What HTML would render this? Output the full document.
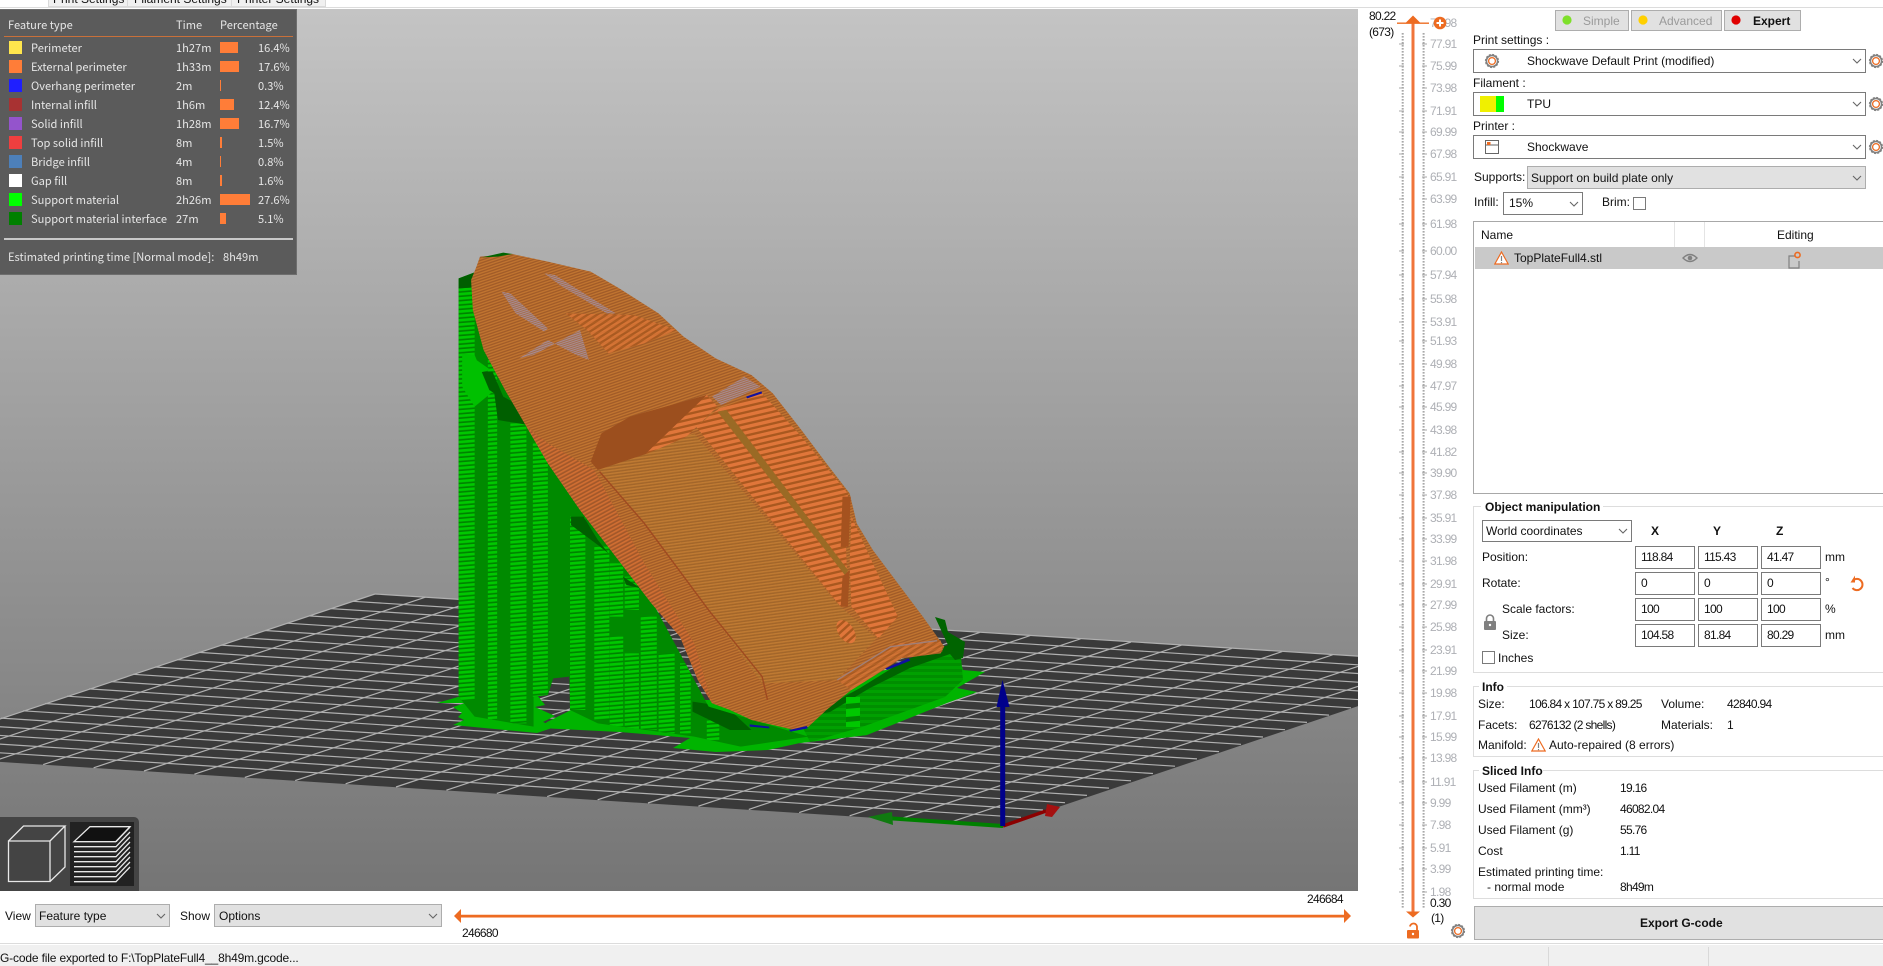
<!DOCTYPE html>
<html><head><meta charset="utf-8"><style>
html,body{margin:0;padding:0;width:1883px;height:966px;overflow:hidden;background:#fff}
body{position:relative;font-family:"Liberation Sans",sans-serif;font-size:12px;color:#111}
.t{position:absolute;white-space:nowrap;line-height:16px}
.n{letter-spacing:-.7px}
.b{font-weight:bold}
.r{position:absolute;box-sizing:border-box}
.c{background:#fff;border:1px solid #7a7a7a}
.g{background:#e1e1e1;border:1px solid #adadad}
.i{background:#fff;border:1px solid #7a7a7a;width:60px;height:23px}
.l{position:absolute;font-family:"Noto Sans CJK SC",sans-serif;font-size:11.1px;color:#e6e6e6;white-space:nowrap;line-height:18px}
.s{position:absolute;left:9px;width:13px;height:13px}
.bar{position:absolute;left:220px;height:11px;background:#ff7d38}
.y{position:absolute;left:1430px;color:#aeb0b5;white-space:nowrap;line-height:16px;letter-spacing:-.7px}
svg{position:absolute;overflow:visible}
</style></head><body>

<!-- top tabs -->
<div class="r" style="left:48px;top:-3px;width:80px;height:10px;background:#f0f0f0;border:1px solid #d9d9d9"></div>
<div class="r" style="left:127px;top:-3px;width:105px;height:10px;background:#f0f0f0;border:1px solid #d9d9d9"></div>
<div class="r" style="left:231px;top:-3px;width:95px;height:10px;background:#f0f0f0;border:1px solid #d9d9d9"></div>
<div class="t" style="left:53px;top:-9px">Print Settings</div>
<div class="t" style="left:134px;top:-9px">Filament Settings</div>
<div class="t" style="left:237px;top:-9px">Printer Settings</div>
<div class="r" style="left:0;top:7px;width:1883px;height:1px;background:#dcdcdc"></div>

<!-- viewport -->
<div class="r" style="left:0;top:9px;width:1358px;height:882px;overflow:hidden;background:linear-gradient(#c4c4c4,#757575)">
<svg width="1358" height="882" viewBox="0 9 1358 882" style="left:0;top:0">
<defs>
<pattern id="st" width="20" height="13" patternUnits="userSpaceOnUse" patternTransform="rotate(-5)"><rect width="20" height="13" fill="#008200"/><rect width="20" height="8" fill="#00c800"/></pattern>
<pattern id="st2" width="20" height="6" patternUnits="userSpaceOnUse"><rect width="20" height="6" fill="#008e00"/><rect width="20" height="3" fill="#00a000"/></pattern>
<pattern id="fine" width="8" height="8" patternUnits="userSpaceOnUse" patternTransform="rotate(-20)"><rect width="8" height="8" fill="#a25c28"/><rect width="8" height="4" fill="#c07430"/></pattern>
<pattern id="ol" width="9" height="9" patternUnits="userSpaceOnUse" patternTransform="rotate(-8)"><rect width="9" height="9" fill="#a3662a"/><rect width="9" height="4.5" fill="#bf7a32"/></pattern>
<pattern id="big" width="20" height="17" patternUnits="userSpaceOnUse" patternTransform="rotate(-14)"><rect width="20" height="17" fill="#a9581f"/><rect width="20" height="10" fill="#e0763a"/></pattern>
<pattern id="big2" width="20" height="15" patternUnits="userSpaceOnUse" patternTransform="rotate(-35)"><rect width="20" height="15" fill="#a9581f"/><rect width="20" height="8" fill="#dc7536"/></pattern>
<pattern id="side" width="10" height="10" patternUnits="userSpaceOnUse" patternTransform="rotate(-30)"><rect width="10" height="10" fill="#a2582a"/><rect width="10" height="5" fill="#d06e32"/></pattern>
<pattern id="grey" width="6" height="6" patternUnits="userSpaceOnUse" patternTransform="rotate(-20)"><rect width="6" height="6" fill="#a4704a"/><rect width="6" height="3" fill="#a88a96"/></pattern>
<clipPath id="sup"><path d="M80 145L130 125L150 95L220 70L300 500L640 1150L780 1430L1060 1520L870 1550L740 1520L470 1480L392 1440L390 1340L345 1345L330 1395L290 1400L290 1490L125 1460L80 1400Z"/></clipPath>
</defs>

<!-- plate -->
<path d="M375 594L1483 664L1002 826L-108 755Z" fill="#3a3a3a"/>
<path fill="none" stroke="#b0b0b0" stroke-width="1.2" d="M375 594l-483 161m533.4 -157.8l-483 161m533.4 -157.8l-483 161m533.4 -157.8l-483 161m533.4 -157.8l-483 161m533.4 -157.8l-483 161m533.4 -157.8l-483 161m533.4 -157.8l-483 161m533.4 -157.8l-483 161m533.4 -157.8l-483 161m533.4 -157.8l-483 161m533.4 -157.8l-483 161m533.4 -157.8l-483 161m533.4 -157.8l-483 161m533.4 -157.8l-483 161m533.4 -157.8l-483 161m533.4 -157.8l-483 161m533.4 -157.8l-483 161m533.4 -157.8l-483 161m533.4 -157.8l-483 161m533.4 -157.8l-483 161m533.4 -157.8l-483 161"/>
<path fill="none" stroke="#b0b0b0" stroke-width="1.2" d="M375 594l1108 70m-1130 -62.7l1108 70m-1130 -62.7l1108 70m-1130 -62.7l1108 70m-1130 -62.7l1108 70m-1130 -62.7l1108 70m-1130 -62.7l1108 70m-1130 -62.7l1108 70m-1130 -62.7l1108 70m-1130 -62.7l1108 70m-1130 -62.7l1108 70m-1130 -62.7l1108 70m-1130 -62.7l1108 70m-1130 -62.7l1108 70m-1130 -62.7l1108 70m-1130 -62.7l1108 70m-1130 -62.7l1108 70m-1130 -62.7l1108 70m-1130 -62.7l1108 70m-1130 -62.7l1108 70m-1130 -62.7l1108 70m-1130 -62.7l1108 70"/>

<!-- base brims -->
<path fill="#00b400" d="M437 703L458 697L533 690L545 705L535 707L555 716L543 722L555 727L537 733L453 725L464 720L458 717L462 713L453 707L465 703Z"/>
<path fill="#00b400" d="M547 722L573 709L640 700L860 700L867 735L800 743L768 750L716 752L673 748L690 738L620 732L540 728Z"/>

<!-- front right support -->
<path fill="#00b400" d="M800 743L867 735L947 703L977 692L957 688L985 672L963 670L957 650L850 680Z"/>
<path fill="url(#st2)" d="M800 722L845 695L960 645L963 680L945 697L862 727L810 742Z"/>
<path fill="#006400" d="M935 617L945 620L948 632L965 642L963 658L955 660L950 654L910 668L870 688L830 712L810 716L860 688L905 660L948 645Z"/>
<rect x="846" y="697" width="14" height="30" fill="url(#st)"/>

<!-- towers (z coords) -->
<g transform="translate(430 230) scale(.35714 .33333)">
<g clip-path="url(#sup)">
<rect x="60" y="60" width="1050" height="1520" fill="#008a00"/>
<rect x="80" y="170" width="45" height="1240" fill="url(#st)"/>
<rect x="162" y="370" width="26" height="1100" fill="url(#st)"/>
<rect x="225" y="580" width="45" height="900" fill="url(#st)"/>
<rect x="288" y="640" width="42" height="760" fill="url(#st)"/>
<rect x="392" y="860" width="43" height="580" fill="url(#st)"/>
<rect x="460" y="950" width="42" height="520" fill="url(#st)"/>
<rect x="503" y="1000" width="38" height="160" fill="url(#st)"/>
<rect x="503" y="1220" width="38" height="280" fill="url(#st)"/>
<rect x="545" y="1040" width="40" height="100" fill="url(#st)"/>
<rect x="545" y="1270" width="40" height="230" fill="url(#st)"/>
<rect x="590" y="1160" width="45" height="340" fill="url(#st)"/>
<rect x="640" y="1270" width="45" height="240" fill="url(#st)"/>
<rect x="700" y="1300" width="30" height="210" fill="url(#st)"/>
<rect x="775" y="1460" width="35" height="70" fill="url(#st)"/>
<path fill="#005f00" d="M80 145L130 125L160 170L80 175ZM125 425L175 425L205 500L240 520L275 560L275 585L190 570L180 490L125 450ZM395 860L430 860L470 930L500 970L470 945L395 885ZM540 1040L590 1075L550 1065ZM735 1415L830 1430L900 1500L840 1500L735 1445Z"/>
<path fill="#00c000" d="M90 370L125 375L170 490L125 530L90 470ZM130 390L170 420L130 430Z"/>
</g>
<!-- model -->
<path fill="url(#fine)" d="M140 80L230 72L330 95L450 125L530 175L640 250L710 320L800 385L900 435L960 490L1040 600L1110 700L1175 790L1195 880L1240 960L1310 1060L1380 1160L1440 1250L1430 1270L1320 1285L1270 1320L1180 1380L1110 1440L1060 1490L1020 1500L900 1470L840 1440L790 1420L750 1350L700 1220L620 1120L520 980L420 840L330 700L270 590L210 480L150 360L120 240L115 150L130 110Z"/>
<path fill="#006400" d="M145 82L205 68L232 72L190 80Z"/>
<path fill="url(#side)" d="M270 590L330 640L460 720L600 1000L740 1240L790 1420L750 1350L700 1220L620 1120L520 980L420 840L330 700Z"/>
<path fill="url(#grey)" d="M200 185L225 190L330 295L320 305L240 250ZM320 130L350 135L520 250L495 250L370 170ZM790 500L880 440L925 470L815 525ZM250 385L290 375L420 300L445 390L410 375L330 330Z"/>
<path fill="url(#big2)" opacity=".8" d="M380 250L570 255L690 300L600 340L500 370L440 300Z"/>
<path fill="#9c4f1e" d="M450 695L480 610L560 560L775 495L610 670L470 720Z"/>
<path fill="url(#big)" d="M605 670L775 495L805 530L640 700Z"/>
<path fill="url(#big)" d="M745 590L810 535L930 490L1040 620L1170 790L1165 950L1170 1120L1150 1130Z"/>
<path fill="#9a6a25" d="M805 545L830 540L1170 1020L1165 1040Z"/>
<path fill="url(#ol)" d="M470 720L610 670L740 610L1140 1120L1250 1225L1140 1350L930 1360L780 1140L600 880Z"/>
<path fill="#a5521f" d="M1155 800L1178 800L1172 950L1150 950ZM1155 1040L1175 1020L1170 1130L1150 1130Z"/>
<path fill="url(#big)" d="M1180 860L1240 1000L1310 1160L1255 1225L1180 1130L1175 1000Z"/>
<ellipse cx="1165" cy="1205" rx="22" ry="38" fill="url(#big)" transform="rotate(-30 1165 1205)"/>
<path fill="url(#big2)" d="M1140 1350L1300 1240L1430 1230L1435 1265L1320 1285L1270 1320L1180 1380Z" opacity=".65"/>
<path fill="none" stroke="#a07f78" stroke-width="4" d="M1140 1350L1290 1250L1420 1232"/>
<path fill="none" stroke="#a04a20" stroke-width="4" d="M475 725L600 880L780 1140L930 1340L945 1410"/>
<path fill="#1010a0" d="M885 500L928 484L930 490L888 505ZM1275 1315L1340 1285L1345 1292L1280 1320ZM895 1483L950 1490L950 1495L895 1490ZM1005 1500L1055 1488L1058 1495L1010 1505Z"/>
</g>

<!-- axes -->
<path d="M1003 826L886 818" stroke="#008000" stroke-width="4" fill="none"/>
<path d="M868 817L892 812L893 825Z" fill="#107a10"/>
<path d="M1003 826L1046 811" stroke="#8b0000" stroke-width="3.5" fill="none"/>
<path d="M1060 807L1047 804L1045 816L1052 817Z" fill="#a51010"/>
<path d="M1002.7 705V826" stroke="#00008b" stroke-width="5" fill="none"/>
<path d="M1002.5 680L996.5 707H1009.5Z" fill="#00008b"/>
</svg>

<!-- legend -->
<div class="r" style="left:0;top:0;width:297px;height:266px;background:#5b5b5b;border:1px solid #6e6e6e;border-left:0"></div>
</div>

<div class="l" style="left:8px;top:16px">Feature type</div>
<div class="l" style="left:176px;top:16px">Time</div>
<div class="l" style="left:220px;top:16px">Percentage</div>
<div class="r" style="left:4px;top:36px;width:289px;height:1px;background:#c9703a"></div>

<div class="s" style="top:41px;background:#ffe64d"></div><div class="l" style="left:31px;top:39px">Perimeter</div><div class="l" style="left:176px;top:39px">1h27m</div><div class="bar" style="top:42px;width:18px"></div><div class="l" style="left:258px;top:39px">16.4%</div>
<div class="s" style="top:60px;background:#ff7d38"></div><div class="l" style="left:31px;top:58px">External perimeter</div><div class="l" style="left:176px;top:58px">1h33m</div><div class="bar" style="top:61px;width:19px"></div><div class="l" style="left:258px;top:58px">17.6%</div>
<div class="s" style="top:79px;background:#1f1fff"></div><div class="l" style="left:31px;top:77px">Overhang perimeter</div><div class="l" style="left:176px;top:77px">2m</div><div class="bar" style="top:80px;width:1px"></div><div class="l" style="left:258px;top:77px">0.3%</div>
<div class="s" style="top:98px;background:#a83232"></div><div class="l" style="left:31px;top:96px">Internal infill</div><div class="l" style="left:176px;top:96px">1h6m</div><div class="bar" style="top:99px;width:13.5px"></div><div class="l" style="left:258px;top:96px">12.4%</div>
<div class="s" style="top:117px;background:#9454cc"></div><div class="l" style="left:31px;top:115px">Solid infill</div><div class="l" style="left:176px;top:115px">1h28m</div><div class="bar" style="top:118px;width:18.5px"></div><div class="l" style="left:258px;top:115px">16.7%</div>
<div class="s" style="top:136px;background:#ef3f3f"></div><div class="l" style="left:31px;top:134px">Top solid infill</div><div class="l" style="left:176px;top:134px">8m</div><div class="bar" style="top:137px;width:2px"></div><div class="l" style="left:258px;top:134px">1.5%</div>
<div class="s" style="top:155px;background:#4d80ba"></div><div class="l" style="left:31px;top:153px">Bridge infill</div><div class="l" style="left:176px;top:153px">4m</div><div class="bar" style="top:156px;width:1px"></div><div class="l" style="left:258px;top:153px">0.8%</div>
<div class="s" style="top:174px;background:#fff"></div><div class="l" style="left:31px;top:172px">Gap fill</div><div class="l" style="left:176px;top:172px">8m</div><div class="bar" style="top:175px;width:2px"></div><div class="l" style="left:258px;top:172px">1.6%</div>
<div class="s" style="top:193px;background:#0f0"></div><div class="l" style="left:31px;top:191px">Support material</div><div class="l" style="left:176px;top:191px">2h26m</div><div class="bar" style="top:194px;width:30px"></div><div class="l" style="left:258px;top:191px">27.6%</div>
<div class="s" style="top:212px;background:#008000"></div><div class="l" style="left:31px;top:210px">Support material interface</div><div class="l" style="left:176px;top:210px">27m</div><div class="bar" style="top:213px;width:5.5px"></div><div class="l" style="left:258px;top:210px">5.1%</div>
<div class="r" style="left:4px;top:238px;width:289px;height:2px;background:#c8c8c8"></div>
<div class="l" style="left:8px;top:248px">Estimated printing time [Normal mode]:</div>
<div class="l" style="left:223px;top:248px">8h49m</div>

<!-- view toolbar -->
<div class="r" style="left:0;top:817px;width:139px;height:74px;background:#444;border-radius:0 5px 0 0"></div>
<div class="r" style="left:70px;top:822px;width:64px;height:64px;background:#222"></div>
<svg width="140" height="80" viewBox="0 815 140 80" style="left:0;top:815px" fill="none" stroke="#e8e8e8" stroke-width="1.3">
<path d="M8.5 841H50V881.5H8.5ZM8.5 841L23.5 826H65L50 841M65 826V867L50 881.5"/>
<path d="M74 841.7L90 826.7H130L115.7 841.7Z" fill="#111"/>
<path d="M74 846.7H116L130 832M74 851.7H116L130 837M74 856.7H116L130 842M74 861.7H116L130 847M74 866.7H116L130 852M74 871.7H116L130 857M74 876.7H116L130 862M74 881.7H116L130 867M116 841.7L130 827"/>
</svg>

<!-- bottom combos -->
<div class="t" style="left:5px;top:908px">View</div>
<div class="r g" style="left:35px;top:904px;width:135px;height:23px"></div>
<div class="t" style="left:39px;top:908px">Feature type</div>
<div class="t" style="left:180px;top:908px">Show</div>
<div class="r g" style="left:214px;top:904px;width:228px;height:23px"></div>
<div class="t" style="left:219px;top:908px">Options</div>
<svg width="1883" height="966" viewBox="0 0 1883 966" style="left:0;top:0">
<defs>
<symbol id="gear" viewBox="0 0 14 14" overflow="visible"><circle cx="7" cy="7" r="5.6" fill="#fff" stroke="#808080" stroke-width="1.6"/><circle cx="7" cy="7" r="6.5" fill="none" stroke="#808080" stroke-width="1.2" stroke-dasharray="2 1.4"/><circle cx="7" cy="7" r="3.4" fill="#fff" stroke="#ed6b21" stroke-width="1.3"/></symbol>
<symbol id="warn" viewBox="0 0 15 14"><path d="M7.5 1L14.2 13H.8Z" fill="#fff" stroke="#ed6b21" stroke-width="1.2"/><path d="M7.5 5V10M7.5 11V12.2" stroke="#808080" stroke-width="1.2"/></symbol>
</defs>

<!-- horizontal slider -->
<path d="M460 916H1344" stroke="#ed6b21" stroke-width="2.4"/><path d="M460 917.5H1344" stroke="#f8b08a" stroke-width="1"/>
<path d="M454 916L461 909V923Z" fill="#ed6b21"/>
<path d="M1351 916L1344 909V923Z" fill="#ed6b21"/>

<!-- vertical slider -->
<path d="M1402.7 33V908M1423.6 33V908" stroke="#a8a8a8" stroke-width="2" stroke-dasharray="1.6 1.4" fill="none"/>
<path stroke="#a8a8a8" fill="none" d="M1399 44h5M1422 44h5M1399 66h5M1422 66h5M1399 88h5M1422 88h5M1399 111h5M1422 111h5M1399 132h5M1422 132h5M1399 154h5M1422 154h5M1399 177h5M1422 177h5M1399 199h5M1422 199h5M1399 224h5M1422 224h5M1399 251h5M1422 251h5M1399 275h5M1422 275h5M1399 299h5M1422 299h5M1399 322h5M1422 322h5M1399 341h5M1422 341h5M1399 364h5M1422 364h5M1399 386h5M1422 386h5M1399 407h5M1422 407h5M1399 430h5M1422 430h5M1399 452h5M1422 452h5M1399 473h5M1422 473h5M1399 495h5M1422 495h5M1399 518h5M1422 518h5M1399 539h5M1422 539h5M1399 561h5M1422 561h5M1399 584h5M1422 584h5M1399 605h5M1422 605h5M1399 627h5M1422 627h5M1399 650h5M1422 650h5M1399 671h5M1422 671h5M1399 693h5M1422 693h5M1399 716h5M1422 716h5M1399 737h5M1422 737h5M1399 758h5M1422 758h5M1399 782h5M1422 782h5M1399 803h5M1422 803h5M1399 825h5M1422 825h5M1399 848h5M1422 848h5M1399 869h5M1422 869h5M1399 892h5M1422 892h5"/>
<path d="M1413 22V912" stroke="#f0743a" stroke-width="3"/>
<path d="M1397 23.2H1429" stroke="#ed6b21" stroke-width="1.4"/>
<path d="M1413 15.5L1420 22.5H1406Z" fill="#ed6b21"/>
<path d="M1406 911.5H1420L1413 917.5Z" fill="#ed6b21"/>
</svg>

<div class="y" style="top:15px">79.98</div><div class="y" style="top:36px">77.91</div><div class="y" style="top:58px">75.99</div><div class="y" style="top:80px">73.98</div><div class="y" style="top:103px">71.91</div><div class="y" style="top:124px">69.99</div><div class="y" style="top:146px">67.98</div><div class="y" style="top:169px">65.91</div><div class="y" style="top:191px">63.99</div><div class="y" style="top:216px">61.98</div><div class="y" style="top:243px">60.00</div><div class="y" style="top:267px">57.94</div><div class="y" style="top:291px">55.98</div><div class="y" style="top:314px">53.91</div><div class="y" style="top:333px">51.93</div><div class="y" style="top:356px">49.98</div><div class="y" style="top:378px">47.97</div><div class="y" style="top:399px">45.99</div><div class="y" style="top:422px">43.98</div><div class="y" style="top:444px">41.82</div><div class="y" style="top:465px">39.90</div><div class="y" style="top:487px">37.98</div><div class="y" style="top:510px">35.91</div><div class="y" style="top:531px">33.99</div><div class="y" style="top:553px">31.98</div><div class="y" style="top:576px">29.91</div><div class="y" style="top:597px">27.99</div><div class="y" style="top:619px">25.98</div><div class="y" style="top:642px">23.91</div><div class="y" style="top:663px">21.99</div><div class="y" style="top:685px">19.98</div><div class="y" style="top:708px">17.91</div><div class="y" style="top:729px">15.99</div><div class="y" style="top:750px">13.98</div><div class="y" style="top:774px">11.91</div><div class="y" style="top:795px">9.99</div><div class="y" style="top:817px">7.98</div><div class="y" style="top:840px">5.91</div><div class="y" style="top:861px">3.99</div><div class="y" style="top:884px">1.98</div>

<div class="t n" style="left:1369px;top:8px">80.22</div>
<div class="t n" style="left:1369px;top:24px">(673)</div>
<div class="t n" style="left:1430px;top:895px;color:#111">0.30</div>
<div class="t n" style="left:1431px;top:910px">(1)</div>
<div class="t n" style="left:462px;top:925px">246680</div>
<div class="t n" style="left:1307px;top:891px">246684</div>

<!-- panel: groups -->
<div class="r" style="left:1473px;top:506px;width:420px;height:167px;border:1px solid #ddd"></div>
<div class="r" style="left:1473px;top:686px;width:420px;height:71px;border:1px solid #ddd"></div>
<div class="r" style="left:1473px;top:770px;width:420px;height:129px;border:1px solid #ddd"></div>

<!-- mode -->
<div class="r g" style="left:1555px;top:10px;width:74px;height:21px"></div>
<div class="r g" style="left:1631px;top:10px;width:91px;height:21px"></div>
<div class="r g" style="left:1724px;top:10px;width:77px;height:21px"></div>
<div class="t" style="left:1583px;top:13px;color:#9a9a9a">Simple</div>
<div class="t" style="left:1659px;top:13px;color:#9a9a9a">Advanced</div>
<div class="t b" style="left:1753px;top:13px">Expert</div>

<div class="t" style="left:1473px;top:32px">Print settings :</div>
<div class="r c" style="left:1473px;top:49px;width:393px;height:24px"></div>
<div class="t" style="left:1527px;top:53px">Shockwave Default Print (modified)</div>
<div class="t" style="left:1473px;top:75px">Filament :</div>
<div class="r c" style="left:1473px;top:92px;width:393px;height:24px"></div>
<div class="r" style="left:1480px;top:96px;width:16px;height:16px;background:#f0f000"></div>
<div class="r" style="left:1496px;top:96px;width:8px;height:16px;background:#0f0"></div>
<div class="t" style="left:1527px;top:96px">TPU</div>
<div class="t" style="left:1473px;top:118px">Printer :</div>
<div class="r c" style="left:1473px;top:135px;width:393px;height:24px"></div>
<div class="t" style="left:1527px;top:139px">Shockwave</div>
<div class="t" style="left:1474px;top:169px">Supports:</div>
<div class="r g" style="left:1527px;top:166px;width:339px;height:23px"></div>
<div class="t" style="left:1531px;top:170px">Support on build plate only</div>
<div class="t" style="left:1474px;top:194px">Infill:</div>
<div class="r c" style="left:1503px;top:192px;width:80px;height:23px"></div>
<div class="t" style="left:1509px;top:195px">15%</div>
<div class="t" style="left:1602px;top:194px">Brim:</div>
<div class="r c" style="left:1633px;top:197px;width:13px;height:13px"></div>

<!-- list -->
<div class="r" style="left:1473px;top:221px;width:420px;height:273px;border:1px solid #a8a8a8"></div>
<div class="r" style="left:1674px;top:222px;width:1px;height:25px;background:#e4e4e4"></div>
<div class="r" style="left:1704px;top:222px;width:1px;height:25px;background:#e4e4e4"></div>
<div class="t" style="left:1481px;top:227px">Name</div>
<div class="t" style="left:1777px;top:227px">Editing</div>
<div class="r" style="left:1475px;top:247px;width:408px;height:22px;background:#c9c9c9"></div>
<div class="t" style="left:1514px;top:250px">TopPlateFull4.stl</div>

<!-- object manipulation -->
<div class="r" style="left:1481px;top:500px;width:122px;height:12px;background:#fff"></div>
<div class="t b" style="left:1485px;top:499px">Object manipulation</div>
<div class="r c" style="left:1482px;top:520px;width:150px;height:22px"></div>
<div class="t" style="left:1486px;top:523px">World coordinates</div>
<div class="t b" style="left:1651px;top:523px">X</div>
<div class="t b" style="left:1713px;top:523px">Y</div>
<div class="t b" style="left:1776px;top:523px">Z</div>
<div class="t" style="left:1482px;top:549px">Position:</div>
<div class="t" style="left:1482px;top:575px">Rotate:</div>
<div class="t" style="left:1502px;top:601px">Scale factors:</div>
<div class="t" style="left:1502px;top:627px">Size:</div>

<div class="r i" style="left:1635px;top:546px"></div><div class="r i" style="left:1698px;top:546px"></div><div class="r i" style="left:1761px;top:546px"></div>
<div class="r i" style="left:1635px;top:572px"></div><div class="r i" style="left:1698px;top:572px"></div><div class="r i" style="left:1761px;top:572px"></div>
<div class="r i" style="left:1635px;top:598px"></div><div class="r i" style="left:1698px;top:598px"></div><div class="r i" style="left:1761px;top:598px"></div>
<div class="r i" style="left:1635px;top:624px"></div><div class="r i" style="left:1698px;top:624px"></div><div class="r i" style="left:1761px;top:624px"></div>

<div class="t n" style="left:1641px;top:549px">118.84</div><div class="t n" style="left:1704px;top:549px">115.43</div><div class="t n" style="left:1767px;top:549px">41.47</div><div class="t" style="left:1825px;top:549px">mm</div>
<div class="t n" style="left:1641px;top:575px">0</div><div class="t n" style="left:1704px;top:575px">0</div><div class="t n" style="left:1767px;top:575px">0</div><div class="t" style="left:1825px;top:574px">°</div>
<div class="t n" style="left:1641px;top:601px">100</div><div class="t n" style="left:1704px;top:601px">100</div><div class="t n" style="left:1767px;top:601px">100</div><div class="t" style="left:1825px;top:601px">%</div>
<div class="t n" style="left:1641px;top:627px">104.58</div><div class="t n" style="left:1704px;top:627px">81.84</div><div class="t n" style="left:1767px;top:627px">80.29</div><div class="t" style="left:1825px;top:627px">mm</div>

<div class="r c" style="left:1482px;top:651px;width:13px;height:13px"></div>
<div class="t" style="left:1498px;top:650px">Inches</div>

<!-- info -->
<div class="r" style="left:1479px;top:680px;width:28px;height:12px;background:#fff"></div>
<div class="t b" style="left:1482px;top:679px">Info</div>
<div class="t" style="left:1478px;top:696px">Size:</div><div class="t n" style="left:1529px;top:696px">106.84 x 107.75 x 89.25</div><div class="t" style="left:1661px;top:696px">Volume:</div><div class="t n" style="left:1727px;top:696px">42840.94</div>
<div class="t" style="left:1478px;top:717px">Facets:</div><div class="t n" style="left:1529px;top:717px">6276132 (2 shells)</div><div class="t" style="left:1661px;top:717px">Materials:</div><div class="t n" style="left:1727px;top:717px">1</div>
<div class="t" style="left:1478px;top:737px">Manifold:</div><div class="t" style="left:1549px;top:737px">Auto-repaired (8 errors)</div>

<!-- sliced -->
<div class="r" style="left:1479px;top:764px;width:64px;height:12px;background:#fff"></div>
<div class="t b" style="left:1482px;top:763px">Sliced Info</div>
<div class="t" style="left:1478px;top:780px">Used Filament (m)</div><div class="t n" style="left:1620px;top:780px">19.16</div>
<div class="t" style="left:1478px;top:801px">Used Filament (mm³)</div><div class="t n" style="left:1620px;top:801px">46082.04</div>
<div class="t" style="left:1478px;top:822px">Used Filament (g)</div><div class="t n" style="left:1620px;top:822px">55.76</div>
<div class="t" style="left:1478px;top:843px">Cost</div><div class="t n" style="left:1620px;top:843px">1.11</div>
<div class="t" style="left:1478px;top:864px">Estimated printing time:</div>
<div class="t" style="left:1487px;top:879px">- normal mode</div><div class="t n" style="left:1620px;top:879px">8h49m</div>

<!-- export -->
<div class="r g" style="left:1474px;top:906px;width:420px;height:34px"></div>
<div class="t b" style="left:1640px;top:915px">Export G-code</div>

<!-- status -->
<div class="r" style="left:0;top:943px;width:1883px;height:1px;background:#dcdcdc"></div>
<div class="r" style="left:0;top:945px;width:1883px;height:21px;background:#f0f0f0"></div>
<div class="r" style="left:1548px;top:947px;width:1px;height:19px;background:#d9d9d9"></div>
<div class="r" style="left:1708px;top:947px;width:1px;height:19px;background:#d9d9d9"></div>
<div class="t" style="left:0;top:950px;letter-spacing:-.16px">G-code file exported to F:\TopPlateFull4__8h49m.gcode...</div>

<!-- icons overlay -->
<svg width="1883" height="966" viewBox="0 0 1883 966" style="left:0;top:0">
<g fill="none" stroke="#666" stroke-width="1.1">
<path d="M157 914L161 918L165 914M429 914L433 918L437 914M1853 59L1857 63L1861 59M1853 102L1857 106L1861 102M1853 145L1857 149L1861 145M1853 176L1857 180L1861 176M1570 202L1574 206L1578 202M1619 529L1623 533L1627 529"/>
</g>
<circle cx="1567" cy="20" r="4.6" fill="#7ee02a"/>
<circle cx="1643" cy="20" r="4.6" fill="#ffd000"/>
<circle cx="1736" cy="20" r="4.6" fill="#e00000"/>
<use href="#gear" x="1485" y="54" width="14" height="14"/>
<use href="#gear" x="1869" y="54" width="14" height="14"/>
<use href="#gear" x="1869" y="97" width="14" height="14"/>
<use href="#gear" x="1869" y="140" width="14" height="14"/>
<use href="#gear" x="1451" y="924" width="14" height="14"/>
<rect x="1485.5" y="140.5" width="13" height="13" fill="#fff" stroke="#666"/>
<path d="M1485.5 145H1498.5" stroke="#666"/>
<rect x="1487" y="142" width="3.5" height="3" fill="#ed6b21"/>
<use href="#warn" x="1494" y="251" width="15" height="14"/>
<use href="#warn" x="1531" y="738" width="15" height="14"/>
<path d="M1683 258Q1690 251 1697 258Q1690 265 1683 258Z" fill="none" stroke="#808080" stroke-width="1.4"/>
<circle cx="1690" cy="258" r="2.3" fill="#808080"/>
<path d="M1795 256H1789V268H1799V261" fill="none" stroke="#808080" stroke-width="1.2"/>
<circle cx="1797.5" cy="255" r="2.6" fill="none" stroke="#ed6b21" stroke-width="1.6"/>
<!-- undo -->
<path d="M1853 580.5A5.6 5.6 0 1 1 1852.5 588" fill="none" stroke="#ed6b21" stroke-width="2"/>
<path d="M1855 575.5V582.5H1850.5Z" fill="#ed6b21"/>
<!-- lock -->
<rect x="1484" y="621" width="12" height="9" rx="1" fill="#808080"/>
<path d="M1486.5 621V618.5A3.5 3.5 0 0 1 1493.5 618.5V621" fill="none" stroke="#808080" stroke-width="1.6"/>
<circle cx="1490" cy="625" r="1.2" fill="#fff"/>
<!-- plus -->
<circle cx="1440" cy="23" r="6.3" fill="#ed6b21"/>
<path d="M1436.5 23H1443.5M1440 19.5V26.5" stroke="#fff" stroke-width="2"/>
<!-- unlock -->
<rect x="1407" y="930" width="12" height="8.5" rx="1" fill="#ed6b21"/>
<path d="M1417 930V927.5A3.5 3.5 0 0 0 1410 926.5" fill="none" stroke="#ed6b21" stroke-width="1.8"/>
<circle cx="1413" cy="934" r="1.2" fill="#fff"/>
</svg>
</body></html>
